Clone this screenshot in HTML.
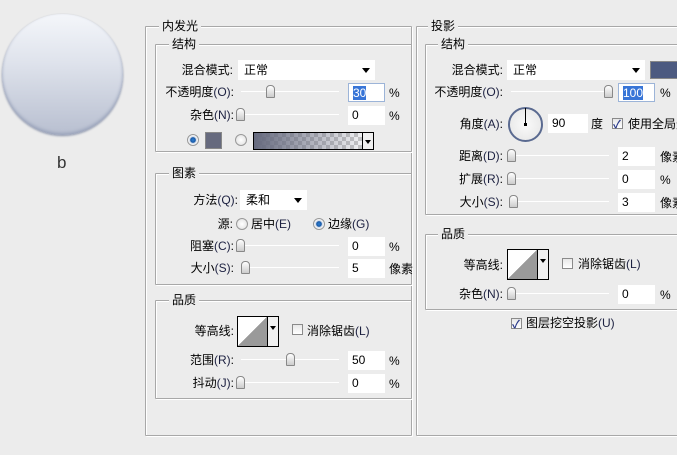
<!DOCTYPE html>
<html><head><meta charset="utf-8"><style>
*{margin:0;padding:0;box-sizing:border-box}
body{width:677px;height:455px;background:#ececec;position:relative;overflow:hidden;font:12px "Liberation Sans","Noto Sans CJK SC",sans-serif;color:#000}
div,span{position:absolute}
.box{border:1px solid #a8a8a8;border-radius:1px;box-shadow:1px 1px 0 #fff inset,1px 1px 0 #fff}
.t{background:#ececec;padding:0 3px;line-height:14px;white-space:nowrap}
.l{width:110px;text-align:right;line-height:14px;white-space:nowrap}
.l b,.x b{font-weight:normal;color:#1c2040}
.x{line-height:14px;white-space:nowrap}
.in{background:#fff;height:19px;line-height:19px;padding-left:4px;white-space:nowrap}
.dd{background:#fff;height:20px;line-height:20px;padding-left:6px}
.dd:after{content:"";position:absolute;right:5px;top:8px;border:4px solid transparent;border-top:5px solid #000;border-bottom:0}
.tr{height:1px;background:#b4b4b4;border-bottom:1px solid #fff}
.th{width:9px;height:13px;border:1px solid #888;border-radius:4px 4px 1px 1px;background:linear-gradient(#fff,#ccc)}
.cb{width:11px;height:11px;border:1px solid #8a8a8a;background:linear-gradient(#e8e8e8,#fff)}
.ck:after{content:"✓";position:absolute;left:0;top:-3px;font-size:11px;color:#2a3a8a;font-weight:bold}
.rd{width:12px;height:12px;border-radius:50%;border:1px solid #999;background:radial-gradient(#fff,#ddd)}
.rd.on{background:radial-gradient(circle,#2d7fd0 0,#1a5aa8 35%,#cfd8e6 45%,#fff 70%)}
.ct{width:42px;height:31px;border:1px solid #000;background:#fff}
.ct i{position:absolute;left:0;top:0;width:29px;height:29px;background:linear-gradient(to bottom right,#fff 50%,#9a9a9a 50%)}
.ct s{position:absolute;right:0;top:0;width:11px;height:29px;border-left:1px solid #000;background:#f0f0f0}
.ct s:after{content:"";position:absolute;left:2px;top:9px;border:3px solid transparent;border-top:4px solid #000;border-bottom:0}
.sel{background:#3875d7;color:#fff}
</style></head><body>

<div style="left:2px;top:14px;width:121px;height:121px;border-radius:50%;background:linear-gradient(#f4f6fa,#dfe3ec 40%,#b8bfd0);box-shadow:0 1px 2px #8a93aa,inset 0 -2px 3px #9aa3ba"></div>
<div class="x" style="left:57px;top:154px;font-size:17px;line-height:18px;color:#333">b</div>

<div class="box" style="left:145px;top:26px;width:267px;height:410px"></div>
<div class="t" style="left:159px;top:19px">内发光</div>
<div class="box" style="left:155px;top:44px;width:257px;height:108px"></div>
<div class="t" style="left:169px;top:37px">结构</div>
<div class="l" style="left:123px;top:63px">混合模式:</div>
<div class="dd" style="left:238px;top:60px;width:137px">正常</div>
<div class="l" style="left:124px;top:85px">不透明度<b>(O)</b>:</div>
<div class="tr" style="left:241px;top:91px;width:98px"></div>
<div class="th" style="left:266px;top:85px"></div>
<div class="in" style="left:348px;top:83px;width:37px;border:1px solid #9cb4d8"><span class="sel" style="position:static">30</span></div>
<div class="x" style="left:389px;top:86px">%</div>
<div class="l" style="left:124px;top:108px">杂色<b>(N)</b>:</div>
<div class="tr" style="left:241px;top:114px;width:98px"></div>
<div class="th" style="left:236px;top:108px"></div>
<div class="in" style="left:348px;top:106px;width:37px">0</div>
<div class="x" style="left:389px;top:109px">%</div>
<div class="rd on" style="left:187px;top:134px"></div>
<div style="left:205px;top:132px;width:17px;height:17px;background:#666a7e;border:1px solid #888"></div>
<div class="rd" style="left:235px;top:134px"></div>
<div style="left:253px;top:132px;width:121px;height:18px;border:1px solid #000;background:linear-gradient(90deg,#666a7e,rgba(102,106,126,0)),repeating-conic-gradient(#ccc 0 25%,#fff 0 50%) 0 0/8px 8px"></div>
<div style="left:362px;top:133px;width:11px;height:16px;background:#f0f0f0;border-left:1px solid #000"></div>
<div style="left:365px;top:140px;border:3px solid transparent;border-top:4px solid #000;border-bottom:0"></div>

<div class="box" style="left:155px;top:173px;width:257px;height:112px"></div>
<div class="t" style="left:169px;top:166px">图素</div>
<div class="l" style="left:128px;top:193px">方法<b>(Q)</b>:</div>
<div class="dd" style="left:240px;top:190px;width:67px">柔和</div>
<div class="l" style="left:123px;top:217px">源:</div>
<div class="rd" style="left:236px;top:218px"></div>
<div class="x" style="left:251px;top:217px">居中<b>(E)</b></div>
<div class="rd on" style="left:313px;top:218px"></div>
<div class="x" style="left:328px;top:217px">边缘<b>(G)</b></div>
<div class="l" style="left:124px;top:239px">阻塞<b>(C)</b>:</div>
<div class="tr" style="left:241px;top:245px;width:98px"></div>
<div class="th" style="left:236px;top:239px"></div>
<div class="in" style="left:348px;top:237px;width:37px">0</div>
<div class="x" style="left:389px;top:240px">%</div>
<div class="l" style="left:124px;top:261px">大小<b>(S)</b>:</div>
<div class="tr" style="left:241px;top:267px;width:98px"></div>
<div class="th" style="left:241px;top:261px"></div>
<div class="in" style="left:348px;top:259px;width:37px">5</div>
<div class="x" style="left:389px;top:262px">像素</div>

<div class="box" style="left:155px;top:300px;width:257px;height:99px"></div>
<div class="t" style="left:169px;top:293px">品质</div>
<div class="l" style="left:124px;top:324px">等高线:</div>
<div class="ct" style="left:237px;top:316px"><i></i><s></s></div>
<div class="cb" style="left:292px;top:324px"></div>
<div class="x" style="left:307px;top:324px">消除锯齿<b>(L)</b></div>
<div class="l" style="left:124px;top:353px">范围<b>(R)</b>:</div>
<div class="tr" style="left:241px;top:359px;width:98px"></div>
<div class="th" style="left:286px;top:353px"></div>
<div class="in" style="left:348px;top:351px;width:37px">50</div>
<div class="x" style="left:389px;top:354px">%</div>
<div class="l" style="left:124px;top:376px">抖动<b>(J)</b>:</div>
<div class="tr" style="left:241px;top:382px;width:98px"></div>
<div class="th" style="left:236px;top:376px"></div>
<div class="in" style="left:348px;top:374px;width:37px">0</div>
<div class="x" style="left:389px;top:377px">%</div>

<div class="box" style="left:416px;top:26px;width:270px;height:410px"></div>
<div class="t" style="left:428px;top:19px">投影</div>
<div class="box" style="left:425px;top:44px;width:260px;height:171px"></div>
<div class="t" style="left:438px;top:37px">结构</div>
<div class="l" style="left:393px;top:63px">混合模式:</div>
<div class="dd" style="left:507px;top:60px;width:138px">正常</div>
<div style="left:650px;top:61px;width:30px;height:18px;background:#4c5a80;border:1px solid #888"></div>
<div class="l" style="left:393px;top:85px">不透明度<b>(O)</b>:</div>
<div class="tr" style="left:511px;top:91px;width:98px"></div>
<div class="th" style="left:604px;top:85px"></div>
<div class="in" style="left:618px;top:83px;width:37px;border:1px solid #9cb4d8"><span class="sel" style="position:static">100</span></div>
<div class="x" style="left:660px;top:86px">%</div>
<div class="l" style="left:393px;top:117px">角度<b>(A)</b>:</div>
<div style="left:508px;top:107px;width:35px;height:35px;border-radius:50%;border:2px solid #5a6a90;background:radial-gradient(#fafafa,#e4e4e4)"></div>
<div style="left:525px;top:108px;width:1px;height:16px;background:#000"></div>
<div style="left:524px;top:123px;width:3px;height:3px;background:#000"></div>
<div class="in" style="left:548px;top:114px;width:40px">90</div>
<div class="x" style="left:591px;top:117px">度</div>
<div class="cb ck" style="left:612px;top:118px"></div>
<div class="x" style="left:628px;top:117px">使用全局光</div>
<div class="l" style="left:393px;top:149px">距离<b>(D)</b>:</div>
<div class="tr" style="left:511px;top:155px;width:98px"></div>
<div class="th" style="left:507px;top:149px"></div>
<div class="in" style="left:618px;top:147px;width:37px">2</div>
<div class="x" style="left:660px;top:150px">像素</div>
<div class="l" style="left:393px;top:172px">扩展<b>(R)</b>:</div>
<div class="tr" style="left:511px;top:178px;width:98px"></div>
<div class="th" style="left:507px;top:172px"></div>
<div class="in" style="left:618px;top:170px;width:37px">0</div>
<div class="x" style="left:660px;top:173px">%</div>
<div class="l" style="left:393px;top:195px">大小<b>(S)</b>:</div>
<div class="tr" style="left:511px;top:201px;width:98px"></div>
<div class="th" style="left:509px;top:195px"></div>
<div class="in" style="left:618px;top:193px;width:37px">3</div>
<div class="x" style="left:660px;top:196px">像素</div>

<div class="box" style="left:425px;top:234px;width:260px;height:76px"></div>
<div class="t" style="left:438px;top:227px">品质</div>
<div class="l" style="left:393px;top:258px">等高线:</div>
<div class="ct" style="left:507px;top:249px"><i></i><s></s></div>
<div class="cb" style="left:562px;top:258px"></div>
<div class="x" style="left:578px;top:257px">消除锯齿<b>(L)</b></div>
<div class="l" style="left:393px;top:287px">杂色<b>(N)</b>:</div>
<div class="tr" style="left:511px;top:293px;width:98px"></div>
<div class="th" style="left:507px;top:287px"></div>
<div class="in" style="left:618px;top:285px;width:37px">0</div>
<div class="x" style="left:660px;top:288px">%</div>
<div class="cb ck" style="left:511px;top:318px"></div>
<div class="x" style="left:526px;top:316px">图层挖空投影<b>(U)</b></div>
</body></html>
